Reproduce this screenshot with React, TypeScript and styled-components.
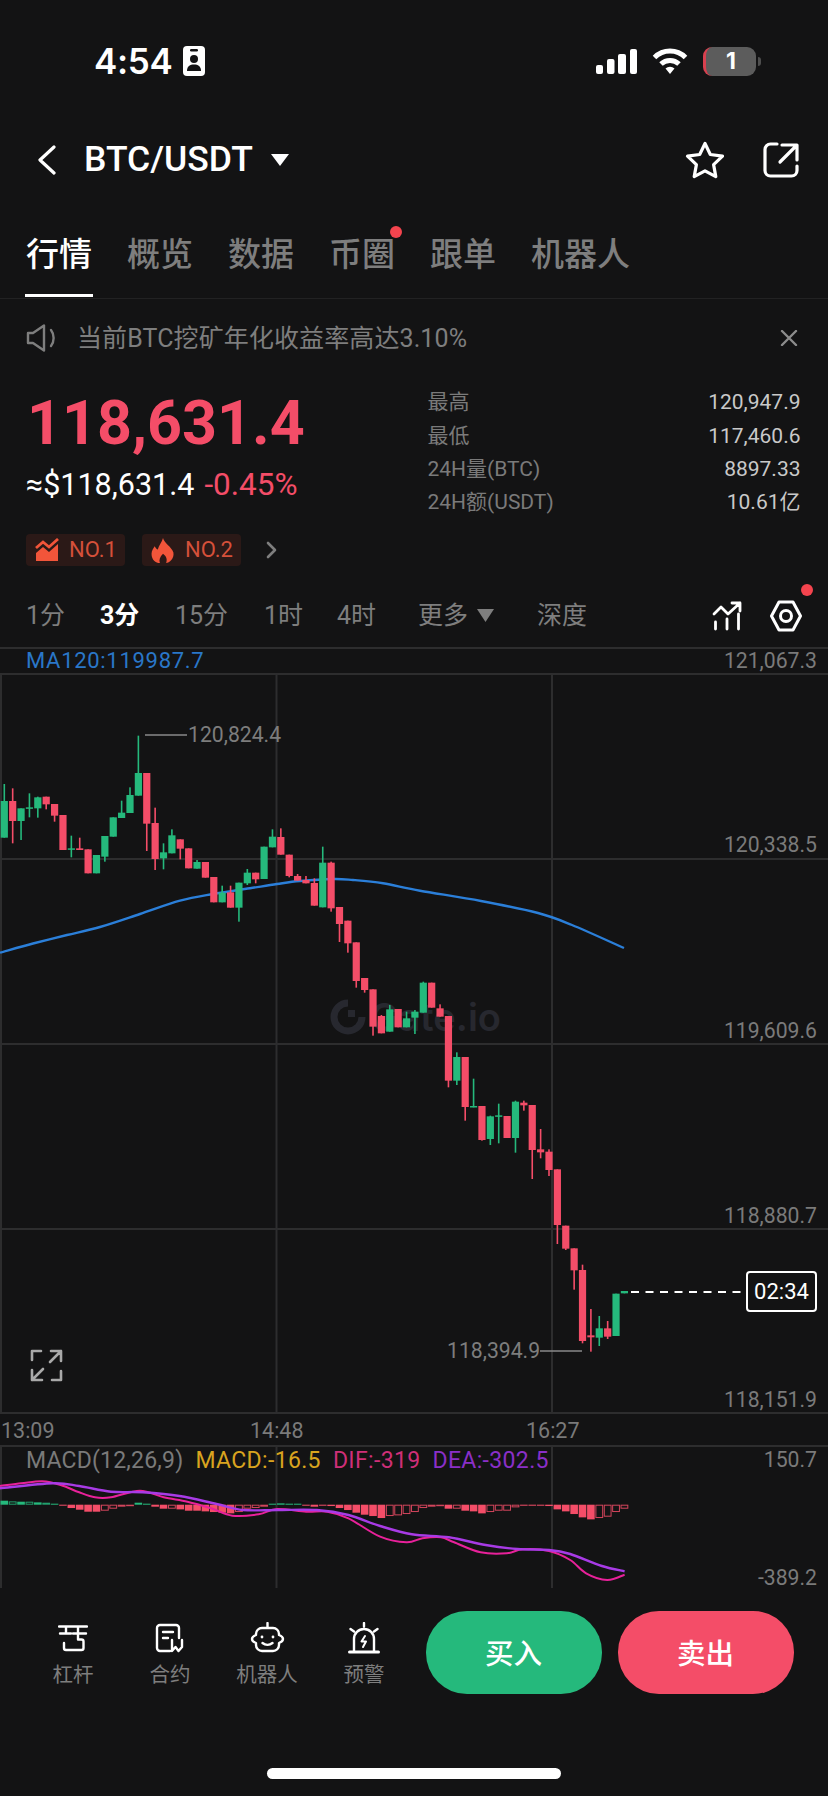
import React from "react";
import styled, { createGlobalStyle } from "styled-components";

const NUM = `Roboto, "Noto Sans CJK SC", sans-serif`;
const BG = "#131314";
const GREEN = "#25b97c";
const RED = "#f44d68";
const GRID = "#2d2d2e";

const Global = createGlobalStyle`
  html, body { margin: 0; padding: 0; background: ${BG}; }
  * { box-sizing: border-box; }
`;

const Page = styled.div`
  width: 828px;
  height: 1796px;
  background: ${BG};
  color: #fff;
  font-family: ${NUM};
  display: flex;
  flex-direction: column;
  overflow: hidden;
`;

/* status bar */
const StatusBar = styled.div`
  height: 122px;
  display: flex;
  align-items: center;
  padding: 0 72px 0 94px;
`;
const Clock = styled.span`
  font: 600 35px/1 Inter, sans-serif;
  letter-spacing: -0.3px;
  margin-right: 10px;
`;
const StatusRight = styled.div`
  margin-left: auto;
  display: flex;
  align-items: center;
  gap: 15px;
`;
const Battery = styled.div`
  position: relative;
  width: 53px;
  height: 29px;
  border-radius: 9px;
  background: #5c5c5c;
  border-left: 3px solid #d8404f;
  display: flex;
  align-items: center;
  justify-content: center;
  font: 700 23px/1 Inter, sans-serif;
  &::after {
    content: "";
    position: absolute;
    right: -5px;
    top: 10px;
    width: 3px;
    height: 9px;
    border-radius: 0 3px 3px 0;
    background: #4e4e4e;
  }
`;

/* nav */
const NavBar = styled.div`
  height: 76px;
  display: flex;
  align-items: center;
  padding: 0 29px 0 38px;
`;
const Pair = styled.span`
  font: 500 35.5px/1 Roboto, sans-serif;
  margin-left: 28px;
  margin-right: 18px;
`;
const NavRight = styled.div`
  margin-left: auto;
  display: flex;
  align-items: center;
  gap: 38px;
`;

/* tabs */
const Tabs = styled.div`
  height: 101px;
  display: flex;
  gap: 35px;
  padding: 0 0 0 26px;
  border-bottom: 1px solid #222223;
`;
const Tab = styled.div<{ $active?: boolean; $dot?: boolean }>`
  position: relative;
  height: 100px;
  padding-top: 33px;
  font: 500 33px/42px "Noto Sans CJK SC", sans-serif;
  color: ${(p) => (p.$active ? "#fff" : "#7e7e7e")};
  white-space: nowrap;
  ${(p) =>
    p.$active &&
    `&::after { content: ""; position: absolute; left: -1px; right: -1px; bottom: 1px; height: 3px; background: #fff; }`}
  ${(p) =>
    p.$dot &&
    `&::before { content: ""; position: absolute; right: -7px; top: 28px; width: 12px; height: 12px; border-radius: 50%; background: #f4444e; }`}
`;

/* notice */
const Notice = styled.div`
  height: 78px;
  display: flex;
  align-items: center;
  gap: 19px;
  padding: 0 30px 0 26px;
`;
const NoticeText = styled.span`
  font: 400 25px/1 ${NUM};
  letter-spacing: 0.1px;
  color: #7e7e7e;
  flex: 1;
`;

/* quote */
const Quote = styled.div`
  height: 203px;
  display: grid;
  grid-template-columns: 401.5px 373px;
  padding-left: 26px;
`;
const PriceCol = styled.div`
  display: flex;
  flex-direction: column;
`;
const BigPrice = styled.div`
  font: 700 61px/72px Roboto, sans-serif;
  color: ${RED};
  margin-left: 1px;
  margin-top: 10px;
`;
const SubPrice = styled.div`
  display: flex;
  align-items: center;
  gap: 10px;
  font: 400 30.5px/36px Roboto, sans-serif;
  margin-top: 8px;
  white-space: nowrap;
`;
const Change = styled.span`
  color: ${RED};
  font-size: 31.5px;
`;
const Badges = styled.div`
  display: flex;
  align-items: center;
  gap: 17px;
  margin-top: 31px;
`;
const Badge = styled.div`
  width: 99px;
  height: 32px;
  background: #2b1917;
  border-radius: 4px;
  display: flex;
  align-items: center;
  gap: 10px;
  padding-left: 9px;
  font: 400 22px/1 Roboto, sans-serif;
  color: #d5503a;
`;
const MoreRanks = styled.svg`
  margin-left: 8px;
`;
const Stats = styled.div`
  display: grid;
  grid-template-columns: 1fr auto;
  grid-auto-rows: 33.4px;
  align-items: center;
  margin-top: 9px;
  height: 134px;
  font: 400 21px/1 ${NUM};
`;
const StatLabel = styled.span`
  color: #7a7a7a;
`;
const StatValue = styled.span`
  color: #c9c9c9;
  text-align: right;
`;

/* periods */
const Periods = styled.div`
  height: 67px;
  padding: 4px 0 0 26px;
  display: flex;
  align-items: center;
`;
const Period = styled.span<{ $active?: boolean; $w: number }>`
  width: ${(p) => p.$w}px;
  flex: none;
  font: ${(p) => (p.$active ? 700 : 400)} 25px/1 ${NUM};
  color: ${(p) => (p.$active ? "#fff" : "#7e7e7e")};
  white-space: nowrap;
  display: flex;
  align-items: center;
`;
const MoreCaret = styled.svg`
  margin-left: 9px;
`;
const PeriodIcons = styled.div`
  margin-left: auto;
  margin-right: 26px;
  display: flex;
  align-items: center;
  gap: 28px;
`;
const HexWrap = styled.div`
  position: relative;
  height: 32px;
  &::after {
    content: "";
    position: absolute;
    right: -11px;
    top: -16px;
    width: 12px;
    height: 12px;
    border-radius: 50%;
    background: #f4444e;
  }
`;

/* chart */
const Legend = styled.div`
  height: 26px;
  border-top: 2px solid ${GRID};
  display: flex;
  align-items: center;
  justify-content: space-between;
  padding: 0 11px 0 26px;
  font: 400 22px/1 Roboto, sans-serif;
  color: #7a7a7a;
`;
const MaText = styled.span`
  color: #2a77c8;
  letter-spacing: 0.7px;
`;
const AxisValue = styled.span`
  font-size: 21.2px;
`;
const PriceChart = styled.div`
  position: relative;
  height: 741px;
  & > svg {
    position: absolute;
    inset: 0;
  }
`;
const Watermark = styled.div`
  position: absolute;
  left: 330px;
  top: 323px;
  display: flex;
  align-items: center;
  gap: 4px;
  font: 600 38px/42px Inter, sans-serif;
  color: #27282f;
`;
const AxisLabel = styled.span<{ $y: number }>`
  position: absolute;
  right: 11px;
  top: ${(p) => p.$y}px;
  transform: translateY(-50%);
  font: 400 21.2px/1 Roboto, sans-serif;
  color: #7a7a7a;
`;
const Extreme = styled.span<{ $x: number; $y: number }>`
  position: absolute;
  left: ${(p) => p.$x}px;
  top: ${(p) => p.$y}px;
  transform: translateY(-50%);
  font: 400 21.2px/1 Roboto, sans-serif;
  color: #7d7d7d;
`;
const Countdown = styled.div`
  position: absolute;
  left: 746px;
  top: 598px;
  width: 71px;
  height: 41px;
  border: 2px solid #fff;
  border-radius: 4px;
  background: ${BG};
  display: flex;
  align-items: center;
  justify-content: center;
  font: 400 22px/1 Roboto, sans-serif;
`;
const FullScreen = styled.div`
  position: absolute;
  left: 30px;
  top: 676px;
  width: 33px;
  height: 33px;
`;
const TimeAxis = styled.div`
  position: relative;
  height: 33px;
  border-bottom: 2px solid ${GRID};
`;
const TimeLabel = styled.span<{ $x: number }>`
  position: absolute;
  left: ${(p) => p.$x}px;
  top: 6px;
  font: 400 21.5px/1 Roboto, sans-serif;
  color: #7a7a7a;
`;
const MacdPanel = styled.div`
  position: relative;
  height: 143px;
  & > svg {
    position: absolute;
    inset: 0;
  }
`;
const MacdLegend = styled.div`
  position: absolute;
  left: 26px;
  top: 1px;
  display: flex;
  gap: 12px;
  font: 400 23px/26px Roboto, sans-serif;
  white-space: nowrap;
`;
const MacdItem = styled.span<{ $c: string; $wide?: boolean }>`
  color: ${(p) => p.$c};
  letter-spacing: ${(p) => (p.$wide ? 0.35 : 0.2)}px;
`;

/* bottom */
const Bottom = styled.div`
  flex: 1;
  display: flex;
  flex-direction: column;
  padding-top: 21px;
`;
const Actions = styled.div`
  display: flex;
  height: 83px;
  padding-left: 24.5px;
`;
const Tool = styled.div`
  width: 97px;
  padding-top: 11px;
  display: flex;
  flex-direction: column;
  align-items: center;
  height: 83px;
`;
const ToolIcon = styled.div`
  height: 31px;
  display: flex;
  align-items: center;
  justify-content: center;
`;
const ToolLabel = styled.span`
  margin-top: 7px;
  font: 400 20.5px/26px "Noto Sans CJK SC", sans-serif;
  color: #7e7e7e;
  white-space: nowrap;
`;
const TradeButton = styled.button<{ $c: string; $first?: boolean }>`
  width: 176px;
  height: 83px;
  border: 0;
  border-radius: 41px;
  background: ${(p) => p.$c};
  color: #fff;
  font: 500 28.5px/1 "Noto Sans CJK SC", sans-serif;
  margin-left: ${(p) => (p.$first ? 13 : 16)}px;
  padding: 0;
`;
const HomeBar = styled.div`
  width: 294px;
  height: 11px;
  border-radius: 6px;
  background: #fff;
  margin: 74px auto 0;
`;

/* data – [color, wickTop, bodyTop, bodyBottom, wickBottom] */
type C = ["g" | "r", number, number, number, number];
const z3: C[] = [
  ["g",372,423,533,533],["r",385,423,483,550],["g",445,445,483,540],["g",400,442,446,472],["g",410,412,445,473],
  ["r",410,410,433,448],["r",432,432,467,485],["r",465,465,570,570],["g",527,565,568,592],["r",533,565,570,570],
  ["r",568,568,640,640],["g",585,585,640,640],["g",528,528,590,605],["g",472,472,530,530],["g",422,458,474,474],
  ["g",382,405,459,459],["g",227,339,407,407],["r",339,339,491,573],["r",443,489,597,630],["g",550,577,595,628],
  ["g",508,526,580,580],["r",538,538,566,598],["r",565,565,625,625],["g",600,606,626,626],["r",606,606,653,653],
  ["r",651,651,727,727],["g",677,698,727,727],["r",677,697,743,743],["g",668,668,743,785],["g",627,638,670,675],
  ["r",638,638,658,670],["g",560,560,657,657],["g",508,530,562,562],["r",505,531,584,584],["r",584,584,648,652],
  ["r",642,648,662,662],["r",648,660,670,670],["r",655,669,737,737],["g",560,608,742,742],["r",605,608,745,755],
  ["r",741,741,792,846],["r",782,782,850,878],["r",847,847,963,983],["r",954,954,990,998],["r",988,988,1100,1127],
  ["r",1065,1068,1120,1120],["g",1035,1048,1115,1115],["r",1047,1047,1102,1102],["g",1055,1075,1102,1102],["g",1050,1055,1073,1122],
];
const z4: C[] = [
  ["g",65,68,158,158],["r",68,68,143,143],["r",133,145,170,170],["r",168,168,362,382],["g",277,291,362,375],
  ["r",291,291,441,482],["g",356,438,442,442],["r",438,438,540,542],["g",467,469,537,555],["g",431,466,470,550],
  ["r",468,468,534,534],["g",422,425,534,578],["r",422,428,436,452],["r",435,435,570,657],["r",507,568,577,595],
  ["r",568,575,630,648],["r",628,628,795,852],["r",797,797,866,870],["r",865,865,931,989],["r",914,930,1143,1150],
  ["r",1047,1126,1132,1175],["g",1068,1105,1133,1158],["r",1083,1105,1130,1137],["g",1001,1001,1128,1128],["g",993,993,1000,1000],
];
const toY3 = (v: number) => v / 3 - 13;
const toY4 = (v: number) => v / 3 + 287;
const candles = [
  ...z3.map((c) => [c[0], toY3(c[1]), toY3(c[2]), toY3(c[3]), toY3(c[4])] as const),
  ...z4.map((c) => [c[0], toY4(c[1]), toY4(c[2]), toY4(c[3]), toY4(c[4])] as const),
];
const candleX = (i: number) => 4.3 + 8.38 * i;

/* Catmull-Rom through the points, so the lines bend as the reference's do */
const smooth = (p: number[][]) => {
  let d = `M${p[0][0].toFixed(1)} ${p[0][1].toFixed(1)}`;
  for (let i = 0; i < p.length - 1; i++) {
    const a = p[Math.max(i - 1, 0)];
    const b = p[i];
    const c = p[i + 1];
    const e = p[Math.min(i + 2, p.length - 1)];
    const c1 = [b[0] + (c[0] - a[0]) / 6, b[1] + (c[1] - a[1]) / 6];
    const c2 = [c[0] - (e[0] - b[0]) / 6, c[1] - (e[1] - b[1]) / 6];
    d += `C${c1[0].toFixed(1)} ${c1[1].toFixed(1)} ${c2[0].toFixed(1)} ${c2[1].toFixed(1)} ${c[0].toFixed(1)} ${c[1].toFixed(1)}`;
  }
  return d;
};

const maLine = smooth([
  [0,279.7],[33,270.5],[67,262],[100,254],[140,241],[180,227.7],[213,221],[250,215.3],[277,211],
  [300,208],[333,206],[353,207],[383,210.3],[420,217.7],[481,228],[538,240],[572,252],[624,275],
]);

/* histogram: delta in zoom px from baseline, positive is below; 1 = hollow */
const hist: [number, 0 | 1][] = [
  [-12,0],[-10,1],[-9,0],[-9,1],[-7,0],[-6,1],[-1,0],[2,0],[10,0],[15,0],[21,0],[21,0],[18,1],[12,1],[6,1],[2,1],
  [-6,0],[-3,0],[6,0],[12,0],[12,1],[14,0],[18,0],[18,0],[20,0],[22,0],[24,0],[26,0],[22,1],[12,1],[10,1],[6,1],
  [-3,0],[-4,0],[-3,0],[-1,0],[2,0],
  [6,0],[2,0],[4,0],[10,0],[16,0],[24,0],[30,0],[34,0],[40,0],[34,1],[32,1],[28,1],[22,1],[10,1],[6,1],[4,1],
  [12,0],[12,1],[18,0],[20,0],[26,0],[22,1],[18,1],[18,1],[8,1],[3,0],[2,0],[2,0],[4,0],[14,0],[20,0],[28,0],[38,0],[44,0],[40,1],[36,1],[22,1],[12,1],
];
const histBase = 57.7;
const m = (pts: number[][]) => smooth(pts.map(([x, y]) => [x / 1.894, y / 3 - 47]));
const dif = m([[0,258],[40,250],[80,244],[115,255],[150,277],[180,292],[210,292],[265,272],[310,292],[355,305],[400,325],[440,347],[490,343],[525,327],[580,335],[620,335],[660,355],[720,410],[770,427],[800,415],[835,412],[860,427],[910,457],[960,460],[990,448],[1040,453],[1080,480],[1110,520],[1150,540],[1183,524]]);
const dea = m([[0,265],[100,250],[150,258],[210,275],[270,277],[340,288],[410,312],[460,330],[525,330],[600,330],[660,345],[720,378],[780,403],[850,412],[920,435],[980,447],[1040,450],[1080,462],[1140,498],[1183,514]]);

const Grid = ({ rows, h }: { rows: number[]; h: number }) => (
  <g stroke={GRID} strokeWidth={2}>
    {rows.map((y) => (
      <line key={y} x1={0} x2={828} y1={y} y2={y} />
    ))}
    <line x1={1} x2={1} y1={0} y2={h} />
    <line x1={276.5} x2={276.5} y1={0} y2={h} />
    <line x1={552} x2={552} y1={0} y2={h} />
  </g>
);

const TOOLS = [
  { label: "杠杆", icon: (
    <svg width="30" height="30" viewBox="0 0 30 30" fill="none" stroke="#fff" strokeWidth="2.4" strokeLinecap="round" strokeLinejoin="round">
      <path d="M1 3.500h28M8 3.500v7M2 10.500h11M20 3.500v7M15 10.500h13M20 10.500v6h3.500a2 2 0 0 1 2 2v6.500a2 2 0 0 1-2 2H8a2 2 0 0 1-2-2v-5" />
    </svg>) },
  { label: "合约", icon: (
    <svg width="30" height="30" viewBox="0 0 30 30" fill="none" stroke="#fff" strokeWidth="2.4" strokeLinecap="round" strokeLinejoin="round">
      <path d="M24 15V5a3 3 0 0 0-3-3H5a3 3 0 0 0-3 3v20a3 3 0 0 0 3 3h10M8 9h10M8 15h5M17 17v11l3.500-4 3 4 3.500-4v-7" />
    </svg>) },
  { label: "机器人", icon: (
    <svg width="35" height="31" viewBox="0 0 35 31" fill="none" stroke="#fff" strokeWidth="2.4" strokeLinecap="round" strokeLinejoin="round">
      <path d="M17.500 1v5M12 6h11a6 6 0 0 1 6 6v1c2.500 1 4 2.500 4 4s-1.500 3-4 4v2a6 6 0 0 1-6 6H12a6 6 0 0 1-6-6v-2c-2.500-1-4-2.500-4-4s1.500-3 4-4v-1a6 6 0 0 1 6-6zM12.500 21c3 2.500 7 2.500 10 0" />
      <circle cx="12" cy="15" r="1.400" fill="#fff" stroke="none" />
      <circle cx="23" cy="15" r="1.400" fill="#fff" stroke="none" />
    </svg>) },
  { label: "预警", icon: (
    <svg width="32" height="32" viewBox="0 0 32 32" fill="none" stroke="#fff" strokeWidth="2.4" strokeLinecap="round" strokeLinejoin="round">
      <path d="M1.500 30h29" strokeWidth="3" />
      <path d="M6 29V17a10 10 0 0 1 20 0v12M16 1v3.500M2.500 7l3.500 2.500M29.500 7L26 9.500" />
      <path d="M17 14l-3.500 5.500H18L15 25" strokeWidth="2" />
    </svg>) },
];

export default function App() {
  return (
    <Page>
      <Global />
      <StatusBar>
        <Clock>4:54</Clock>
        <svg width="22" height="30" viewBox="0 0 22 30">
          <rect width="22" height="30" rx="4" fill="#fff" />
          <rect x="7" y="3" width="8" height="2.500" rx="1.200" fill={BG} />
          <circle cx="11" cy="13" r="4" fill={BG} />
          <path d="M4 25c0-5 3-6.500 7-6.500s7 1.500 7 6.500z" fill={BG} />
        </svg>
        <StatusRight>
          <svg width="41" height="25" viewBox="0 0 41 25" fill="#fff">
            <rect x="0" y="16" width="7" height="9" rx="2" />
            <rect x="11" y="10" width="7.500" height="15" rx="2" />
            <rect x="22" y="5" width="8" height="20" rx="2" />
            <rect x="34" y="0" width="7" height="25" rx="2" />
          </svg>
          <svg width="36" height="27" viewBox="0 0 36 27" fill="none" stroke="#fff" strokeWidth="5">
            <path d="M2.500 9.500a22 22 0 0 1 31 0" />
            <path d="M9 16a13 13 0 0 1 18 0" />
            <path d="M13.500 20.500L18 26l4.500-5.500a6.500 6.500 0 0 0-9 0z" fill="#fff" stroke="none" />
          </svg>
          <Battery>1</Battery>
        </StatusRight>
      </StatusBar>

      <NavBar>
        <svg width="18" height="30" viewBox="0 0 18 30" fill="none" stroke="#fff" strokeWidth="3.200" strokeLinecap="round" strokeLinejoin="round">
          <path d="M16 2L2 15l14 13" />
        </svg>
        <Pair>BTC/USDT</Pair>
        <svg width="18" height="12" viewBox="0 0 18 12" fill="#fff">
          <path d="M0 0h18L9 12z" />
        </svg>
        <NavRight>
          <svg width="40" height="38" viewBox="0 0 40 38" fill="none" stroke="#fff" strokeWidth="3.200" strokeLinejoin="round">
            <path d="M20 2.500l5.300 11 12.200 1.700-8.900 8.400 2.200 12-10.800-5.800-10.800 5.800 2.200-12-8.900-8.400 12.200-1.700z" />
          </svg>
          <svg width="36" height="36" viewBox="0 0 36 36" fill="none" stroke="#fff" strokeWidth="3.200" strokeLinecap="round" strokeLinejoin="round">
            <path d="M14 2H7.500A5.500 5.500 0 0 0 2 7.500v21A5.500 5.500 0 0 0 7.500 34h21a5.500 5.500 0 0 0 5.500-5.500V24" />
            <path d="M19 3h15v15M33 4L17 20" />
          </svg>
        </NavRight>
      </NavBar>

      <Tabs>
        <Tab $active>行情</Tab>
        <Tab>概览</Tab>
        <Tab>数据</Tab>
        <Tab $dot>币圈</Tab>
        <Tab>跟单</Tab>
        <Tab>机器人</Tab>
      </Tabs>

      <Notice>
        <svg width="32" height="28" viewBox="0 0 32 28" fill="none" stroke="#7e7e7e" strokeWidth="2.400" strokeLinejoin="round" strokeLinecap="round">
          <path d="M2 9h5l11-7.500v25L7 19H2z" />
          <path d="M25 6c3.500 4.500 3.500 11.500 0 16" />
        </svg>
        <NoticeText>当前BTC挖矿年化收益率高达3.10%</NoticeText>
        <svg width="18" height="16" viewBox="0 0 18 16" stroke="#8c8c8c" strokeWidth="2.400" strokeLinecap="round">
          <path d="M2 1l14 14M16 1L2 15" />
        </svg>
      </Notice>

      <Quote>
        <PriceCol>
          <BigPrice>118,631.4</BigPrice>
          <SubPrice>
            <span>≈$118,631.4</span>
            <Change>-0.45%</Change>
          </SubPrice>
          <Badges>
            <Badge>
              <svg width="24" height="24" viewBox="0 0 24 24" fill="#f2553a">
                <path d="M1 10l7-6 6 5 9-8" fill="none" stroke="#f2553a" strokeWidth="2.800" />
                <path d="M1 15l7-6 6 5 9-8v17H1z" />
              </svg>
              NO.1
            </Badge>
            <Badge>
              <svg width="24" height="25" viewBox="0 0 22 24" fill="#f2553a">
                <path d="M11 0c1 5 8 8 10 14 1 6-4 10-7 10 1-3 1-6-3-9-3 3-4 6-3 9-4 0-8-3-8-9 0-3 2-5 3-7 1 2 2 3 3 3 1-4 4-7 5-11z" />
              </svg>
              NO.2
            </Badge>
            <MoreRanks width="12" height="18" viewBox="0 0 12 18" fill="none" stroke="#7e7e7e" strokeWidth="2.600" strokeLinecap="round" strokeLinejoin="round">
              <path d="M2 2l7 7-7 7" />
            </MoreRanks>
          </Badges>
        </PriceCol>
        <Stats>
          <StatLabel>最高</StatLabel><StatValue>120,947.9</StatValue>
          <StatLabel>最低</StatLabel><StatValue>117,460.6</StatValue>
          <StatLabel>24H量(BTC)</StatLabel><StatValue>8897.33</StatValue>
          <StatLabel>24H额(USDT)</StatLabel><StatValue>10.61亿</StatValue>
        </Stats>
      </Quote>

      <Periods>
        <Period $w={74}>1分</Period>
        <Period $w={75} $active>3分</Period>
        <Period $w={89}>15分</Period>
        <Period $w={73}>1时</Period>
        <Period $w={81}>4时</Period>
        <Period $w={119}>
          更多
          <MoreCaret width="17" height="13" viewBox="0 0 17 13" fill="#7e7e7e">
            <path d="M0 0h17l-8.500 13z" />
          </MoreCaret>
        </Period>
        <Period $w={60}>深度</Period>
        <PeriodIcons>
          <svg width="30" height="30" viewBox="0 0 30 30" fill="none" stroke="#fff" strokeWidth="2.800" strokeLinecap="round" strokeLinejoin="round">
            <path d="M2 13l7-7 7 7L28 2M20 2h8v8" />
            <path d="M3.500 21v7M15 18v10M26.500 13v15" />
          </svg>
          <HexWrap>
            <svg width="32" height="32" viewBox="0 0 32 32" fill="none" stroke="#fff" strokeWidth="3" strokeLinejoin="round">
              <path d="M9 2h14l7.500 14L23 30H9L1.500 16z" />
              <circle cx="16" cy="16" r="5.500" />
            </svg>
          </HexWrap>
        </PeriodIcons>
      </Periods>

      <Legend>
        <MaText>MA120:119987.7</MaText>
        <AxisValue>121,067.3</AxisValue>
      </Legend>

      <PriceChart>
        <Watermark>
          <svg width="36" height="36" viewBox="0 0 36 36" fill="none">
            <path d="M32 18a14 14 0 1 1-14-14" stroke="#27282f" strokeWidth="7" />
            <rect x="18" y="11" width="7" height="7" fill="#27282f" />
          </svg>
          Gate.io
        </Watermark>
        <svg width="828" height="741" viewBox="0 0 828 741">
          <Grid rows={[1, 186, 371, 556, 740]} h={740} />
          <path d={maLine} fill="none" stroke="#2b7fd9" strokeWidth="2.400" />
          {candles.map((c, i) => {
            const color = c[0] === "g" ? GREEN : RED;
            const x = candleX(i);
            return (
              <g key={i} fill={color}>
                <rect x={x - 0.8} y={c[1]} width={1.6} height={c[4] - c[1]} />
                <rect x={x - 3.6} y={c[2]} width={7.2} height={Math.max(c[3] - c[2], 1.5)} />
              </g>
            );
          })}
          <line x1={145} x2={187} y1={62} y2={62} stroke="#8a8a8a" strokeWidth="1.500" />
          <line x1={540} x2={582} y1={678} y2={678} stroke="#8a8a8a" strokeWidth="1.500" />
          <line x1={631} x2={746} y1={619} y2={619} stroke="#fff" strokeWidth="2" strokeDasharray="8 6.500" />
        </svg>
        <Extreme $x={188} $y={62}>120,824.4</Extreme>
        <Extreme $x={447} $y={678}>118,394.9</Extreme>
        <AxisLabel $y={172}>120,338.5</AxisLabel>
        <AxisLabel $y={358}>119,609.6</AxisLabel>
        <AxisLabel $y={543}>118,880.7</AxisLabel>
        <AxisLabel $y={727}>118,151.9</AxisLabel>
        <Countdown>02:34</Countdown>
        <FullScreen>
          <svg width="33" height="33" viewBox="0 0 33 33" fill="none" stroke="#a9a9a9" strokeWidth="2.600" strokeLinecap="round" strokeLinejoin="round">
            <path d="M21 2h10v10M31 2L20 13M12 31H2V21M2 31l11-11M2 11V2h9M31 22v9h-9" />
          </svg>
        </FullScreen>
      </PriceChart>

      <TimeAxis>
        <TimeLabel $x={1}>13:09</TimeLabel>
        <TimeLabel $x={250}>14:48</TimeLabel>
        <TimeLabel $x={526}>16:27</TimeLabel>
      </TimeAxis>

      <MacdPanel>
        <svg width="828" height="143" viewBox="0 0 828 143">
          <Grid rows={[]} h={141} />
          {hist.map(([d, hollow], i) => {
            const x = candleX(i);
            const h = Math.max(Math.abs(d) / 3, 1);
            const y = d < 0 ? histBase - h : histBase;
            const color = d < 0 ? GREEN : RED;
            return hollow ? (
              <rect key={i} x={x - 3.4} y={y + 0.5} width={6.800} height={Math.max(h - 1, 0.5)} fill="none" stroke={color} strokeWidth="1" opacity="0.85" />
            ) : (
              <rect key={i} x={x - 3.8} y={y} width={7.600} height={h} fill={color} />
            );
          })}
          <path d={dif} fill="none" stroke="#e8219a" strokeWidth="2" />
          <path d={dea} fill="none" stroke="#a83be6" strokeWidth="2.400" />
        </svg>
        <MacdLegend>
          <MacdItem $c="#7a7a7a">MACD(12,26,9)</MacdItem>
          <MacdItem $c="#d9a31f" $wide>MACD:-16.5</MacdItem>
          <MacdItem $c="#cf2f78" $wide>DIF:-319</MacdItem>
          <MacdItem $c="#8a2fc8" $wide>DEA:-302.5</MacdItem>
        </MacdLegend>
        <AxisLabel $y={13}>150.7</AxisLabel>
        <AxisLabel $y={131}>-389.2</AxisLabel>
      </MacdPanel>

      <Bottom>
        <Actions>
          {TOOLS.map((t) => (
            <Tool key={t.label}>
              <ToolIcon>{t.icon}</ToolIcon>
              <ToolLabel>{t.label}</ToolLabel>
            </Tool>
          ))}
          <TradeButton $c={GREEN} $first>买入</TradeButton>
          <TradeButton $c={RED}>卖出</TradeButton>
        </Actions>
        <HomeBar />
      </Bottom>
    </Page>
  );
}
